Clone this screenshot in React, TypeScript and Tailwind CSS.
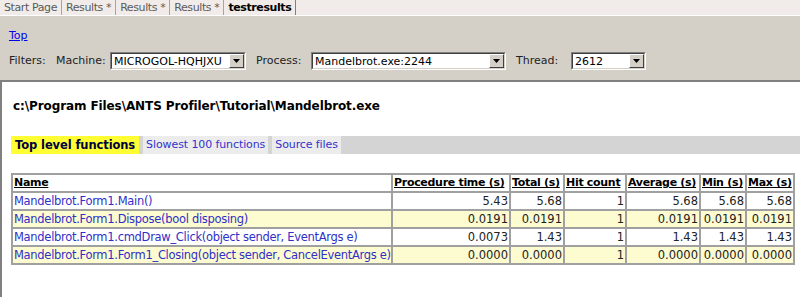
import React from "react";

const rows = [
  ["Mandelbrot.Form1.Main()", "5.43", "5.68", "1", "5.68", "5.68", "5.68"],
  ["Mandelbrot.Form1.Dispose(bool disposing)", "0.0191", "0.0191", "1", "0.0191", "0.0191", "0.0191"],
  ["Mandelbrot.Form1.cmdDraw_Click(object sender, EventArgs e)", "0.0073", "1.43", "1", "1.43", "1.43", "1.43"],
  ["Mandelbrot.Form1.Form1_Closing(object sender, CancelEventArgs e)", "0.0000", "0.0000", "1", "0.0000", "0.0000", "0.0000"],
];

function Select({ value, w }: { value: string; w: string }) {
  return (
    <div className={`${w} h-[18px] flex bg-white border border-t-[#808080] border-l-[#808080] border-r-white border-b-white`}>
      <div className="flex-1 border border-t-[#404040] border-l-[#404040] border-r-[#d4d0c8] border-b-[#d4d0c8] flex items-center pl-[2px] text-[11px] text-black leading-none overflow-hidden whitespace-nowrap">
        <span className="flex-1">{value}</span>
        <div className="w-[15px] h-[14px] bg-[#d4d0c8] border border-t-white border-l-white border-r-[#404040] border-b-[#404040] flex items-center justify-center">
          <svg width="7" height="4" viewBox="0 0 7 4"><path d="M0 0h7L3.5 4z" fill="#000" /></svg>
        </div>
      </div>
    </div>
  );
}

export default function App() {
  const tabs = ["Start Page", "Results *", "Results *", "Results *"];
  return (
    <div className="w-[800px] h-[297px] bg-white overflow-hidden font-['DejaVu_Sans',sans-serif] text-black">
      {/* tab strip */}
      <div className="h-[15px] bg-[#f1ece9] flex items-stretch text-[11px] leading-[15px] tracking-[-0.4px] border-b border-white box-content">
        {tabs.map((t, i) => (
          <div key={i} className="px-[4px] text-[#5a5a5a] border-r border-[#a8a4a0] whitespace-nowrap">{t}</div>
        ))}
        <div className="px-[4px] font-bold text-black border-r border-[#808080] whitespace-nowrap">testresults</div>
      </div>
      {/* filter panel */}
      <div className="bg-[#d4d0c8] h-[64px] pl-[9px] pt-[13px]">
        <div className="text-[11px] leading-[14px]"><span className="text-[#0000ee] underline">Top</span></div>
        <div className="flex items-center mt-[9px] text-[11px] text-[#222] whitespace-nowrap">
          <span className="w-[47px]">Filters:</span>
          <span className="w-[54px]">Machine:</span>
          <Select value="MICROGOL-HQHJXU" w="w-[136px]" />
          <span className="ml-[10px] w-[55px]">Process:</span>
          <Select value="Mandelbrot.exe:2244" w="w-[195px]" />
          <span className="ml-[10px] w-[55px]">Thread:</span>
          <Select value="2612" w="w-[75px]" />
        </div>
      </div>
      {/* content */}
      <div className="border-t-2 border-l-2 border-[#808080] h-[217px] bg-white">
        <div className="pl-[11px] pt-[17px] text-[12px] font-bold leading-[15px] tracking-[-0.1px]">
          c:\Program Files\ANTS Profiler\Tutorial\Mandelbrot.exe
        </div>
        <div className="mt-[22px] ml-[9px] flex h-[18px] bg-[#d4d4d4] text-[11.5px] leading-[18px] tracking-[-0.1px]">
          <div className="bg-[#ffff33] px-[4px] font-bold text-[#000040]">Top level functions</div>
          <div className="ml-[4px] bg-[#ececec] px-[3px] text-[11px] text-[#3333cc]">Slowest 100 functions</div>
          <div className="ml-[4px] bg-[#ececec] px-[3px] text-[11px] text-[#3333cc]">Source files</div>
        </div>
        <div className="ml-[9px] mt-[19px]">
          <table className="w-[784px] border-separate border-spacing-0 table-fixed border border-[#a0a0a0] text-[11.5px] leading-[16px]">
            <colgroup>
              <col className="w-[380px]" />
              <col className="w-[118px]" />
              <col className="w-[54px]" />
              <col className="w-[62px]" />
              <col className="w-[74px]" />
              <col className="w-[46px]" />
              <col className="w-[48px]" />
            </colgroup>
            <thead>
              <tr className="h-[18px]">
                {["Name", "Procedure time (s)", "Total (s)", "Hit count", "Average (s)", "Min (s)", "Max (s)"].map((h) => (
                  <th key={h} className="border border-[#a0a0a0] px-[1px] text-left font-bold underline whitespace-nowrap overflow-hidden text-[11px] tracking-[-0.3px]">{h}</th>
                ))}
              </tr>
            </thead>
            <tbody>
              {rows.map((r, i) => (
                <tr key={i} className={`h-[18px] ${i % 2 === 1 ? "bg-[#fdfbd0]" : "bg-white"}`}>
                  {r.map((c, j) => (
                    <td key={j} className={`border border-[#a0a0a0] px-[1px] whitespace-nowrap overflow-hidden ${j === 0 ? "text-left text-[#3030c8] tracking-[-0.3px]" : "text-right text-[#222]"}`}>{c}</td>
                  ))}
                </tr>
              ))}
            </tbody>
          </table>
        </div>
      </div>
    </div>
  );
}
